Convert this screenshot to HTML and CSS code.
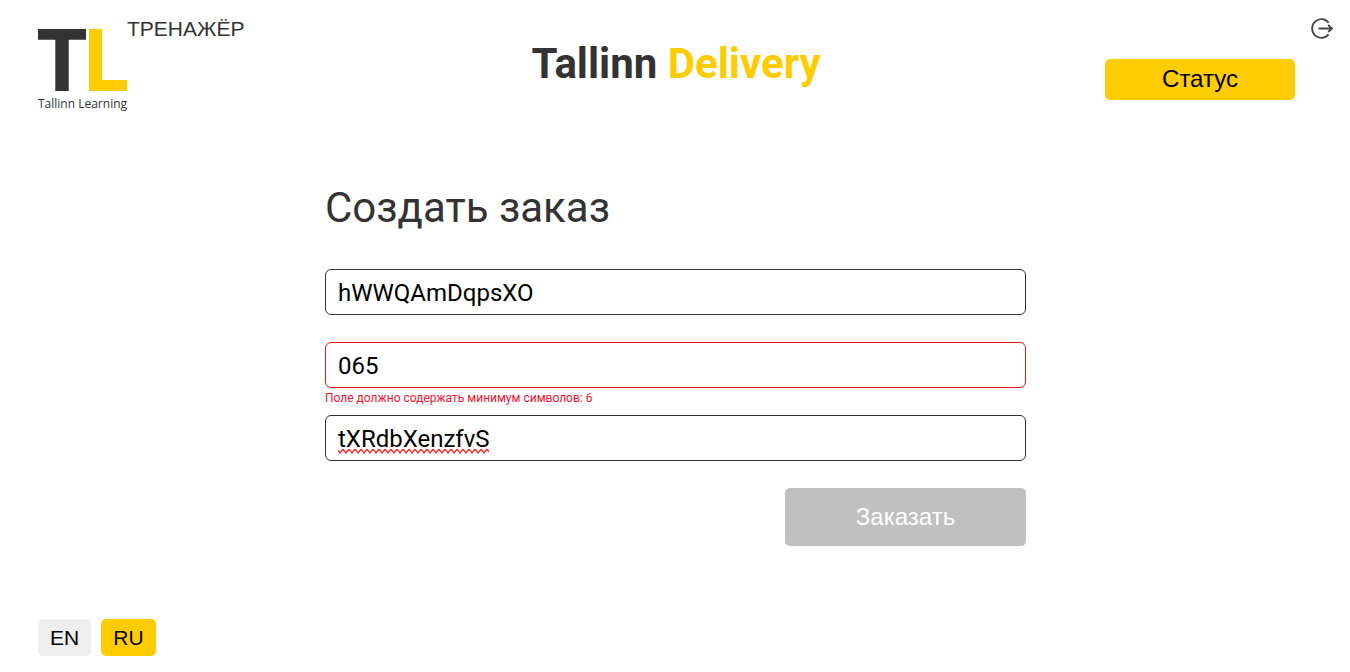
FILE: index.html
```html
<!DOCTYPE html>
<html lang="ru">
<head>
<meta charset="utf-8">
<title>Tallinn Delivery</title>
<link rel="stylesheet" href="styles.css">
</head>
<body>
<div class="page">
  <header class="header">
    <div class="brand">
      <div class="logo">
        <svg class="logo-mark" width="89" height="62" viewBox="0 0 89 62">
          <path fill="#333" d="M0 0H48V10.7H30.7V62H17.3V10.7H0Z"/>
          <path fill="#fc0" d="M51 0H64V51H89V62H51Z"/>
        </svg>
        <span class="logo-name">Tallinn Learning</span>
      </div>
      <span class="trainer">ТРЕНАЖЁР</span>
    </div>
    <h1 class="title">Tallinn <span class="accent">Delivery</span></h1>
    <div class="actions">
      <button class="status">Статус</button>
      <svg class="logout" width="24" height="22" viewBox="0 0 24 22" fill="none" stroke="#444" stroke-width="1.8">
        <path d="M18.6 4.6A9.3 9.3 0 1 0 18.6 16.4"/>
        <path d="M8.5 10.5H22M18.2 7L22 10.5L18.2 14"/>
      </svg>
    </div>
  </header>
  <main class="order">
    <h2 class="heading">Создать заказ</h2>
    <div class="field"><div class="input">hWWQAmDqpsXO</div></div>
    <div class="field">
      <div class="input invalid">065</div>
      <span class="error">Поле должно содержать минимум символов: 6</span>
    </div>
    <div class="field"><div class="input"><span class="misspelled">tXRdbXenzfvS<svg class="squiggle" width="151" height="5">
      <defs><pattern id="wave" width="6" height="5" patternUnits="userSpaceOnUse"><path d="M-1 0L2 4L5 0L8 4" fill="none" stroke="#f33" stroke-width="1.4"/></pattern></defs>
      <rect width="151" height="5" fill="url(#wave)"/></svg></span></div></div>
    <button class="submit" disabled>Заказать</button>
  </main>
  <footer class="languages">
    <button class="language">EN</button>
    <button class="language selected">RU</button>
  </footer>
</div>
</body>
</html>
```
FILE: styles.css
```css
* { box-sizing: border-box; }
body { margin: 0; background: #fff; color: #333; font-family: Roboto, sans-serif; }
button { border: 0; border-radius: 5px; padding: 0; font-family: "Liberation Sans", Arial, sans-serif; color: #000; }
.page { height: 672px; display: flex; flex-direction: column; overflow: hidden; }
.header { height: 183px; display: grid; grid-template-columns: 495px 362px 493px; align-items: start; }
.brand { display: flex; padding-left: 38px; }
.logo { width: 89px; padding-top: 29px; display: flex; flex-direction: column; }
.logo-name { margin-top: 5px; font: 12px/16px "Open Sans", sans-serif; white-space: nowrap; }
.trainer { margin-top: 17px; font: 21px/24px "Liberation Sans", Arial, sans-serif; }
.title { margin: 39px 0 0; text-align: center; font-size: 42px; line-height: 50px; font-weight: 700; white-space: nowrap; }
.accent { color: #fc0; }
.actions { display: flex; justify-content: flex-end; padding: 18px 16px 0 0; gap: 15px; }
.status { width: 190px; height: 41px; margin-top: 41px; padding-bottom: 2px; background: #fc0; font-size: 24px; }
.order { width: 701px; margin-left: 325px; display: flex; flex-direction: column; }
.heading { margin: 0 0 36px; font-size: 42px; line-height: 50px; font-weight: 400; }
.field { height: 73px; }
.input { height: 46px; border: 1px solid #333; border-radius: 6px; padding: 1px 12px 0; font-size: 24px; line-height: 45px; color: #000; }
.invalid { border-color: #f01414; }
.error { display: block; margin-top: 2px; font-size: 12px; line-height: 16px; color: #f01432; }
.misspelled { position: relative; }
.squiggle { position: absolute; left: 0; bottom: -1px; }
.submit { width: 241px; height: 58px; align-self: flex-end; background: silver; color: #fff; font-size: 24px; }
.languages { display: flex; gap: 10px; margin: auto 0 16px 38px; }
.language { width: 53px; height: 37px; background: #efefef; font-size: 21px; padding-top: 1px; }
.selected { width: 55px; background: #fc0; }
```
